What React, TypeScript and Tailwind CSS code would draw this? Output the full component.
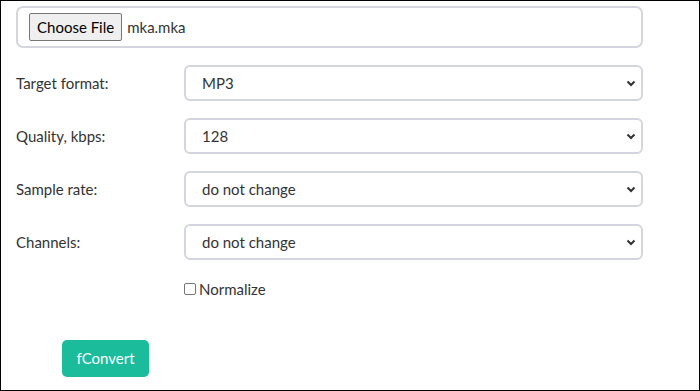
export default function App() {
  const rows = [
    { label: 'Target format:', value: 'MP3' },
    { label: 'Quality, kbps:', value: '128' },
    { label: 'Sample rate:', value: 'do not change' },
    { label: 'Channels:', value: 'do not change' },
  ];

  return (
    <div
      className="w-[700px] h-[391px] border border-black bg-white text-[#333] overflow-hidden"
      style={{ fontFamily: 'Lato, "Open Sans", sans-serif' }}
    >
      <div className="pl-[15px] pt-[5px] w-[642px]">
        {/* File input */}
        <div className="h-[42px] w-[627px] border-2 border-[#d3d6dc] rounded-[7px] flex items-center pl-[11px] gap-[5px]">
          <button className="h-[28px] px-[7px] bg-[#efefef] border border-[#767676] rounded-[2px] text-[15px] text-black">
            Choose File
          </button>
          <span className="text-[15px] text-[#333]">mka.mka</span>
        </div>

        {/* Selects */}
        <div className="mt-[17px] flex flex-col gap-[17px]">
          {rows.map((r) => (
            <div key={r.label} className="flex items-center">
              <label className="w-[168px] text-[15px] text-[#333]">{r.label}</label>
              <div className="relative w-[459px] h-[36px]">
                <div className="h-full w-full border-2 border-[#d3d6dc] rounded-[6px] flex items-center pl-[16px] text-[15px] text-[#333]">
                  {r.value}
                </div>
                <svg
                  className="absolute right-[7px] top-[15px]"
                  width="10"
                  height="7"
                  viewBox="0 0 10 7"
                >
                  <path d="M1.5 1.5 L5 5 L8.5 1.5" fill="none" stroke="#333" strokeWidth="2" />
                </svg>
              </div>
            </div>
          ))}
        </div>

        {/* Normalize */}
        <div className="mt-[18px] ml-[168px] flex items-center gap-[3px] text-[15px] text-[#333]">
          <span className="w-[12px] h-[12px] border border-[#767676] rounded-[2px] bg-white" />
          <span>Normalize</span>
        </div>

        {/* Convert button */}
        <button className="mt-[39px] ml-[46px] h-[37px] w-[87px] rounded-[5px] bg-[#1abc9c] text-white text-[15px]">
          fConvert
        </button>
      </div>
    </div>
  );
}
